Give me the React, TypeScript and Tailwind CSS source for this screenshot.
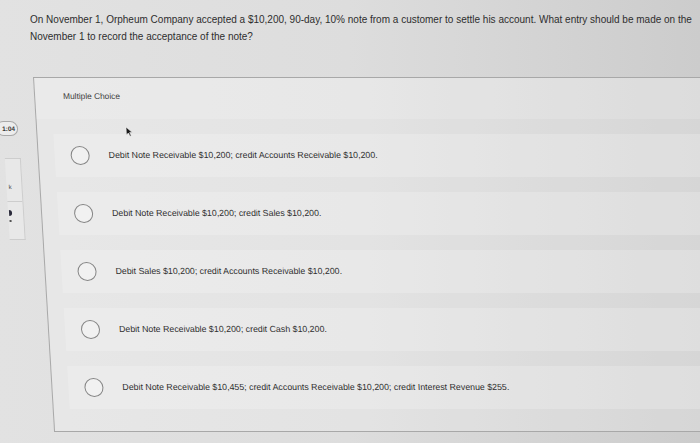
import React from "react";

const choices = [
  "Debit Note Receivable $10,200; credit Accounts Receivable $10,200.",
  "Debit Note Receivable $10,200; credit Sales $10,200.",
  "Debit Sales $10,200; credit Accounts Receivable $10,200.",
  "Debit Note Receivable $10,200; credit Cash $10,200.",
  "Debit Note Receivable $10,455; credit Accounts Receivable $10,200; credit Interest Revenue $255.",
];

function Cursor() {
  return (
    <svg width="8" height="11" viewBox="0 0 8 11" className="absolute left-[88px] top-[48px]">
      <path d="M1 1 L1 9 L3 7 L4.6 10.2 L5.8 9.6 L4.3 6.6 L7 6.6 Z" fill="#1a1a1a" stroke="#f2f2f2" strokeWidth="0.6" />
    </svg>
  );
}

export default function App() {
  return (
    <div className="h-[443px] w-[700px] overflow-hidden bg-linear-to-r from-[#e2e2e2] via-[#dddddd] to-[#cccccc] font-['Liberation_Sans',Arial,sans-serif]">
      <p className="pl-[30px] pt-[11px] text-[10px] leading-[17px] text-[#2e2e2e]">
        On November 1, Orpheum Company accepted a $10,200, 90-day, 10% note from a customer to settle his account. What entry should be made on the
        <br />
        November 1 to record the acceptance of the note?
      </p>

      <div className="mt-[32px] flex origin-top skew-x-[3.4deg]">
        <div className="w-[33px] shrink-0">
          <div className="ml-[-7px] mt-[44px] flex h-[15px] w-[22px] items-center justify-end rounded-full border border-[#a9a9a9] bg-[#ececec] pr-[2px] text-[6.5px] font-bold text-[#3a3a3a]">
            1:04
          </div>
          <div className="mt-[22px] w-[16px] border border-l-0 border-[#cdcdcd] bg-[#e8e8e8]">
            <div className="flex h-[42px] items-end pb-[9px] pl-[2px] text-[6px] text-[#444]">k</div>
            <div className="flex h-[38px] flex-col gap-[4px] border-t border-[#cdcdcd] pl-[1px] pt-[8px]">
              <span className="h-[6px] w-[3px] rounded-r-full bg-[#2a2a3a]" />
              <span className="h-[2px] w-[2px] bg-[#555]" />
            </div>
          </div>
        </div>

        <div className="relative h-[355px] flex-1 border-b border-l border-t border-[#a8a8a8] bg-white/20">
          <div className="h-[41px] bg-white/15 pl-[28px] pt-[13px] text-[8.3px] leading-[10px] text-[#3d3d3d]">
            Multiple Choice
          </div>
          <Cursor />
          <div className="ml-[16px] mt-[15px] flex flex-col gap-[15px]">
            {choices.map((c) => (
              <div key={c} className="flex h-[43px] items-center gap-[19px] bg-white/20 pl-[16px]">
                <span className="h-[19px] w-[19px] shrink-0 rounded-full border-[1.4px] border-[#858585] bg-[#f1f1f1]" />
                <span className="text-[8.8px] text-[#2f2f2f]">{c}</span>
              </div>
            ))}
          </div>
        </div>
      </div>
    </div>
  );
}
